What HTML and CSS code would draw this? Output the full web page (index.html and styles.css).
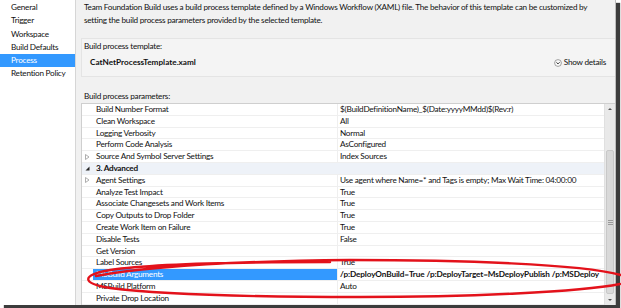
FILE: index.html
```html
<!DOCTYPE html>
<html lang="en">
<head>
<meta charset="utf-8" />
<title>Build Definition - Process</title>
<link rel="stylesheet" href="styles.css">
</head>
<body>
<div class="page">
  <ul class="nav">
    <li>General</li>
    <li>Trigger</li>
    <li>Workspace</li>
    <li>Build Defaults</li>
    <li class="active">Process</li>
    <li>Retention Policy</li>
  </ul>

  <div class="main">
    <p class="intro">Team Foundation Build uses a build process template defined by a Windows Workflow (XAML) file. The behavior of this template can be customized by setting the build process parameters provided by the selected template.</p>

    <div class="template-box">
      <div class="box-label">Build process template:</div>
      <div class="box-row">
        <span class="template-name">CatNetProcessTemplate.xaml</span>
        <span class="details">
          <svg class="details-icon" width="8" height="8" viewBox="0 0 8 8"><circle cx="4" cy="4" r="3.4" fill="#fafafa" stroke="#8a8a8a" stroke-width="0.8"/><path d="M2.4 3.3 L4 4.9 L5.6 3.3" fill="none" stroke="#333" stroke-width="1"/></svg>
          Show details
        </span>
      </div>
    </div>

    <div class="params-label">Build process parameters:</div>

    <div class="grid">
      <div class="rows">
        <div class="row"><span class="gut"></span><span class="name">Build Number Format</span><span class="val">$(BuildDefinitionName)_$(Date:yyyyMMdd)$(Rev:r)</span></div>
        <div class="row"><span class="gut"></span><span class="name">Clean Workspace</span><span class="val">All</span></div>
        <div class="row"><span class="gut"></span><span class="name">Logging Verbosity</span><span class="val">Normal</span></div>
        <div class="row"><span class="gut"></span><span class="name">Perform Code Analysis</span><span class="val">AsConfigured</span></div>
        <div class="row"><span class="gut"><svg width="5" height="6" viewBox="0 0 5 6"><path d="M0.5 0.5 L4 3 L0.5 5.5 Z" fill="#fff" stroke="#9a9a9a" stroke-width="0.8"/></svg></span><span class="name">Source And Symbol Server Settings</span><span class="val">Index Sources</span></div>
        <div class="row group"><span class="gut"><svg width="5" height="5" viewBox="0 0 5 5"><path d="M4.5 0.5 L4.5 4.5 L0.5 4.5 Z" fill="#262626"/></svg></span><span class="name">3. Advanced</span><span class="val"></span></div>
        <div class="row"><span class="gut"><svg width="5" height="6" viewBox="0 0 5 6"><path d="M0.5 0.5 L4 3 L0.5 5.5 Z" fill="#fff" stroke="#9a9a9a" stroke-width="0.8"/></svg></span><span class="name">Agent Settings</span><span class="val">Use agent where Name=* and Tags is empty; Max Wait Time: 04:00:00</span></div>
        <div class="row"><span class="gut"></span><span class="name">Analyze Test Impact</span><span class="val">True</span></div>
        <div class="row"><span class="gut"></span><span class="name">Associate Changesets and Work Items</span><span class="val">True</span></div>
        <div class="row"><span class="gut"></span><span class="name">Copy Outputs to Drop Folder</span><span class="val">True</span></div>
        <div class="row"><span class="gut"></span><span class="name">Create Work Item on Failure</span><span class="val">True</span></div>
        <div class="row"><span class="gut"></span><span class="name">Disable Tests</span><span class="val">False</span></div>
        <div class="row"><span class="gut"></span><span class="name">Get Version</span><span class="val"></span></div>
        <div class="row"><span class="gut"></span><span class="name">Label Sources</span><span class="val">True</span></div>
        <div class="row selected"><span class="gut"></span><span class="name">MSBuild Arguments</span><span class="val">/p:DeployOnBuild=True /p:DeployTarget=MsDeployPublish /p:MSDeploy</span></div>
        <div class="row"><span class="gut"></span><span class="name">MSBuild Platform</span><span class="val">Auto</span></div>
        <div class="row"><span class="gut"></span><span class="name">Private Drop Location</span><span class="val"></span></div>
      </div>
      <div class="scrollbar">
        <svg class="arrow" width="10" height="8" viewBox="0 0 10 8"><path d="M3 5 L5 3 L7 5 Z" fill="#555"/></svg>
        <div class="track">
          <div class="thumb"><span class="grip"></span></div>
        </div>
        <svg class="arrow" width="10" height="8" viewBox="0 0 10 8"><path d="M3 3 L5 5 L7 3 Z" fill="#555"/></svg>
      </div>
    </div>
  </div>
</div>

<svg class="mark" width="621" height="308" viewBox="0 0 621 308">
  <path d="M330 262 C250 262 150 264 110 270 C82 275 80 283 110 288 C170 296 280 297 360 297 C470 297 580 292 620 284 M96 276 C150 266 250 261 350 260 C460 260 580 264 621 275" fill="none" stroke="#e3121b" stroke-width="2.4" stroke-linecap="round"/>
</svg>
</body>
</html>
```

FILE: styles.css
```css
:root {
  --bg: #f1f1f1;
  --text: #111;
  --line: #cfcfcf;
  --row-line: #efefef;
  --select: #3399ff;
  --row-h: 11.8px;
}
*{box-sizing:border-box;margin:0;padding:0;}
body{
  width:621px;
  height:308px;
  overflow:hidden;
  background:#fff;
  font-family:Lato,"Noto Sans",sans-serif;
  font-size:8.2px;
  letter-spacing:-0.25px;
  color:var(--text);
  position:relative;
}
.page{
  width:616px;
  height:305px;
  display:flex;
  background:var(--bg);
  border-right:1px solid #bdbdbd;
  box-shadow:4px 3px 1px #3c3c3c;
  overflow:hidden;
}
.nav{
  list-style:none;
  width:76px;
  flex:none;
  background:#fff;
  border-right:1px solid #d6d6d6;
  padding-top:1px;
}
.nav li{
  height:13.3px;
  line-height:13.3px;
  padding-left:11px;
  white-space:nowrap;
}
.nav li.active{background:var(--select);color:#fff;}
.main{
  flex:1;
  min-width:0;
  display:flex;
  flex-direction:column;
  padding-left:5px;
}
.intro{
  line-height:13px;
  margin-top:1px;
  padding:0 22px 0 3px;
}
.template-box{
  margin-top:11px;
  height:39px;
  border:1px solid #e4e4e4;
  border-right:none;
  background:#f4f4f4;
  padding:1px 0 0 2px;
}
.box-label{line-height:13px;}
.box-row{
  margin-top:3px;
  display:flex;
  align-items:center;
  justify-content:space-between;
  line-height:13px;
  padding-left:6px;
  padding-right:9px;
}
.template-name{font-weight:700;letter-spacing:0;}
.details{display:flex;align-items:center;gap:2px;}
.details-icon{display:block;}
.params-label{
  margin-top:13px;
  line-height:13px;
  padding-left:3px;
}
.grid{
  flex:1;
  min-height:0;
  display:flex;
  border:1px solid var(--line);
  border-right:none;
  border-bottom:none;
  background:#fff;
  overflow:hidden;
}
.rows{flex:1;min-width:0;}
.row{
  display:grid;
  grid-template-columns:11px 245px 1fr;
  height:var(--row-h);
  line-height:calc(var(--row-h) - 1px);
  border-bottom:1px solid var(--row-line);
  white-space:nowrap;
}
.gut{display:flex;align-items:center;justify-content:center;}
.gut svg{display:block;}
.name{padding-left:3px;border-right:1px solid var(--row-line);overflow:hidden;}
.val{padding-left:2px;overflow:hidden;}
.row.group{background:#eef2f8;}
.row.group .name{font-weight:700;border-right:none;}
.row.selected .name{background:var(--select);color:#fff;}
.row.selected .val{font-weight:700;letter-spacing:-0.12px;}
.scrollbar{
  width:11px;
  flex:none;
  display:flex;
  flex-direction:column;
  background:#e9e9e9;
  border-left:1px solid #e0e0e0;
}
.arrow{display:block;flex:none;margin:1px 0;}
.track{flex:1;padding-top:36px;padding-bottom:1px;}
.thumb{
  margin:0 1px;
  height:144px;
  background:#d9d9d9;
  border:1px solid #c8c8c8;
  border-radius:2px;
  display:flex;
  align-items:center;
  justify-content:center;
}
.grip{
  width:5px;
  height:5px;
  border-top:1px solid #9a9a9a;
  border-bottom:1px solid #9a9a9a;
  position:relative;
}
.grip::after{
  content:"";
  position:absolute;
  left:0;
  right:0;
  top:1px;
  border-top:1px solid #9a9a9a;
}
.mark{
  position:absolute;
  left:0;
  top:0;
  pointer-events:none;
}
```
